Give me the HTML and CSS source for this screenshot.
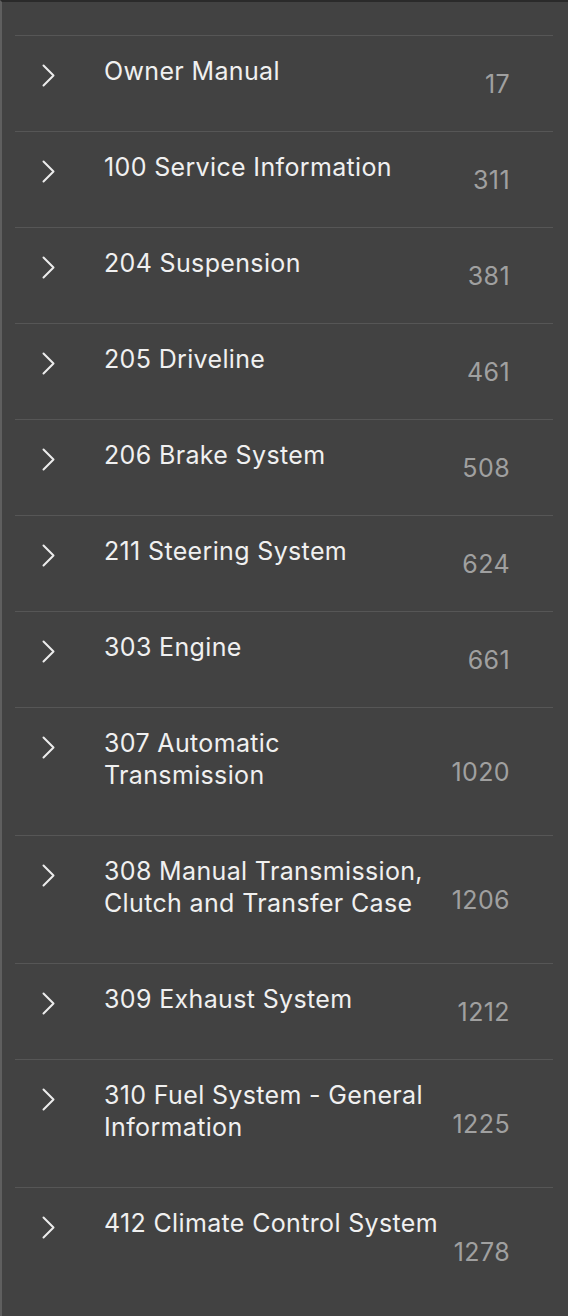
FILE: index.html
```html
<!DOCTYPE html>
<html lang="en">
<head>
    <meta charset="UTF-8">
    <meta name="viewport" content="width=device-width, initial-scale=1.0">
    <title>Manual Sections</title>
    <link rel="stylesheet" href="styles.css">
</head>
<body>
    <div id="sections-panel">
        <ul class="section-list">
            <li class="section-row">
                <svg class="chevron" viewBox="0 0 13 23"><polyline points="1.5,1.5 11.5,11.5 1.5,21.5" /></svg>
                <span class="section-title">Owner Manual</span>
                <span class="section-page">17</span>
            </li>
            <li class="section-row">
                <svg class="chevron" viewBox="0 0 13 23"><polyline points="1.5,1.5 11.5,11.5 1.5,21.5" /></svg>
                <span class="section-title">100 Service Information</span>
                <span class="section-page">311</span>
            </li>
            <li class="section-row">
                <svg class="chevron" viewBox="0 0 13 23"><polyline points="1.5,1.5 11.5,11.5 1.5,21.5" /></svg>
                <span class="section-title">204 Suspension</span>
                <span class="section-page">381</span>
            </li>
            <li class="section-row">
                <svg class="chevron" viewBox="0 0 13 23"><polyline points="1.5,1.5 11.5,11.5 1.5,21.5" /></svg>
                <span class="section-title">205 Driveline</span>
                <span class="section-page">461</span>
            </li>
            <li class="section-row">
                <svg class="chevron" viewBox="0 0 13 23"><polyline points="1.5,1.5 11.5,11.5 1.5,21.5" /></svg>
                <span class="section-title">206 Brake System</span>
                <span class="section-page">508</span>
            </li>
            <li class="section-row">
                <svg class="chevron" viewBox="0 0 13 23"><polyline points="1.5,1.5 11.5,11.5 1.5,21.5" /></svg>
                <span class="section-title">211 Steering System</span>
                <span class="section-page">624</span>
            </li>
            <li class="section-row">
                <svg class="chevron" viewBox="0 0 13 23"><polyline points="1.5,1.5 11.5,11.5 1.5,21.5" /></svg>
                <span class="section-title">303 Engine</span>
                <span class="section-page">661</span>
            </li>
            <li class="section-row">
                <svg class="chevron" viewBox="0 0 13 23"><polyline points="1.5,1.5 11.5,11.5 1.5,21.5" /></svg>
                <span class="section-title">307 Automatic<br>Transmission</span>
                <span class="section-page">1020</span>
            </li>
            <li class="section-row">
                <svg class="chevron" viewBox="0 0 13 23"><polyline points="1.5,1.5 11.5,11.5 1.5,21.5" /></svg>
                <span class="section-title">308 Manual Transmission,<br>Clutch and Transfer Case</span>
                <span class="section-page">1206</span>
            </li>
            <li class="section-row">
                <svg class="chevron" viewBox="0 0 13 23"><polyline points="1.5,1.5 11.5,11.5 1.5,21.5" /></svg>
                <span class="section-title">309 Exhaust System</span>
                <span class="section-page">1212</span>
            </li>
            <li class="section-row">
                <svg class="chevron" viewBox="0 0 13 23"><polyline points="1.5,1.5 11.5,11.5 1.5,21.5" /></svg>
                <span class="section-title">310 Fuel System - General<br>Information</span>
                <span class="section-page">1225</span>
            </li>
            <li class="section-row tall">
                <svg class="chevron" viewBox="0 0 13 23"><polyline points="1.5,1.5 11.5,11.5 1.5,21.5" /></svg>
                <span class="section-title">412 Climate Control System</span>
                <span class="section-page">1278</span>
            </li>
        </ul>
    </div>
</body>
</html>
```

FILE: styles.css
```css
body {
    margin: 0;
    background-color: #1b1430;
    font-family: Inter, "Noto Sans", sans-serif;
    overflow: hidden;
}

#sections-panel {
    height: 1314px;
    background-color: #424242;
    border-top: 2px solid #2a2a2a;
    border-left: 2px solid #5f5f5f;
    border-bottom-left-radius: 12px;
    padding-top: 33px;
    overflow: hidden;
}

.section-list {
    list-style: none;
    margin: 0 15px 0 13px;
    padding: 0;
}

.section-row {
    display: flex;
    border-top: 1px solid #565656;
    padding-left: 27px;
    min-height: 95px;
}

.section-row.tall {
    min-height: 127px;
}

.chevron {
    flex: none;
    width: 13px;
    height: 23px;
    margin-top: 28px;
}

.chevron polyline {
    fill: none;
    stroke: #ececec;
    stroke-width: 2;
    stroke-linecap: round;
    stroke-linejoin: round;
}

.section-title {
    flex: 1;
    padding: 19px 0 44px 49px;
    color: #f0f0f0;
    font-size: 25px;
    line-height: 32px;
    letter-spacing: 0.35px;
}

.section-page {
    flex: none;
    align-self: center;
    width: 64px;
    padding-right: 43px;
    text-align: right;
    color: #a0a0a0;
    font-size: 25px;
    letter-spacing: 0.4px;
}
```
